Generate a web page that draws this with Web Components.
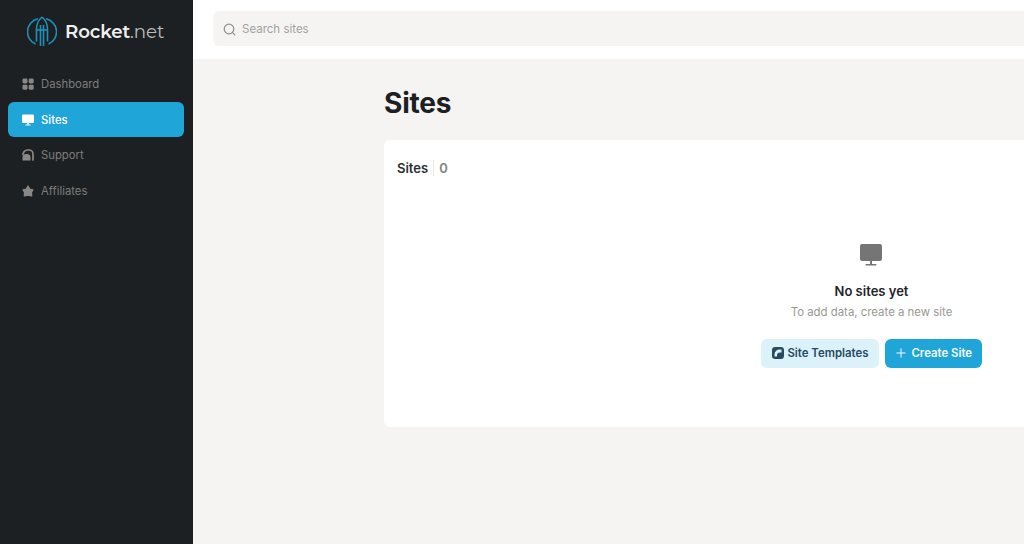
<!DOCTYPE html>
<html>
<head>
<meta charset="utf-8">
<style>
  html, body { margin: 0; height: 100%; overflow: hidden; }
  body { font-family: Inter, "Liberation Sans", sans-serif; }
</style>
</head>
<body>
<app-shell>
  <side-bar slot="side">
    <nav-item label="Dashboard" icon="grid"></nav-item>
    <nav-item label="Sites" icon="monitor" active></nav-item>
    <nav-item label="Support" icon="support"></nav-item>
    <nav-item label="Affiliates" icon="star"></nav-item>
  </side-bar>
  <search-bar slot="top" placeholder="Search sites"></search-bar>
  <sites-card slot="main" count="0">
    <empty-state title="No sites yet" text="To add data, create a new site">
      <app-button kind="soft" icon="template">Site Templates</app-button>
      <app-button kind="primary" icon="plus">Create Site</app-button>
    </empty-state>
  </sites-card>
</app-shell>

<script>
  const ICONS = {
    grid: '<svg viewBox="0 0 12 12" width="12" height="12" fill="currentColor"><rect x="0.5" y="0.5" width="5" height="5" rx="1.4"/><rect x="6.7" y="0.5" width="5" height="5" rx="1.4"/><rect x="0.5" y="6.7" width="5" height="5" rx="1.4"/><rect x="6.7" y="6.7" width="5" height="5" rx="1.4"/></svg>',
    monitor: '<svg viewBox="0 0 12 12" width="12" height="12" fill="currentColor"><rect x="0" y="0.5" width="12" height="8.500" rx="1.200"/><rect x="5.200" y="9" width="1.600" height="1.600"/><rect x="3.400" y="10.400" width="5.200" height="1" rx=".5"/></svg>',
    support: '<svg viewBox="0 0 12 12" width="12" height="12"><path d="M1 5.500A4.500 4.500 0 0 1 5.500 1H7A4 4 0 0 1 11 5V11" fill="none" stroke="currentColor" stroke-width="1.700" stroke-linecap="round"/><path d="M.5 11.500V8.500A3.500 3.500 0 0 1 4 5H5A3.500 3.500 0 0 1 8.500 8.500V11.500Z" fill="currentColor"/></svg>',
    star: '<svg viewBox="0 0 12 12" width="12" height="12" fill="currentColor"><path d="M6 1 7.700 4.100 11 4.800 9.500 7.500 9.700 11 6 10.100 2.300 11 2.500 7.500 1 4.800 4.300 4.100Z" stroke="currentColor" stroke-width="1.200" stroke-linejoin="round"/></svg>',
    template: '<svg viewBox="0 0 12 12" width="12" height="12"><rect x="0" y="0" width="12" height="12" rx="3.200" fill="currentColor"/><path d="M2.500 7.500A5 5 0 0 1 7.500 2.500H9.500V5.500H8A3 3 0 0 0 5 8.500V9.500H2.500Z" fill="#dcf2fa"/></svg>',
    plus: '<svg viewBox="0 0 12 12" width="12" height="12" fill="none" stroke="currentColor" stroke-width="1" stroke-linecap="round"><path d="M6 1.800v8.400M1.800 6h8.400"/></svg>'
  };

  class AppShell extends HTMLElement {
    constructor() {
      super();
      this.attachShadow({ mode: 'open' });
      this.shadowRoot.innerHTML = `
        <style>
          :host { display: grid; grid-template-columns: 193px 1fr; height: 544px; width: 1024px; overflow: hidden; }
          .side { background: #1c2023; }
          .right { display: flex; flex-direction: column; min-width: 0; background: #f5f4f2; }
          .top { background: #fff; height: 59px; box-sizing: border-box; padding: 11px 0 0 20px; }
          .main { padding: 26px 0 0 191px; }
          h1 { margin: 0 0 19px; font-size: 28px; line-height: 36px; font-weight: 700; color: #1c2023; letter-spacing: -0.2px; }
        </style>
        <div class="side"><slot name="side"></slot></div>
        <div class="right">
          <div class="top"><slot name="top"></slot></div>
          <div class="main">
            <h1>Sites</h1>
            <slot name="main"></slot>
          </div>
        </div>
      `;
    }
  }

  class SideBar extends HTMLElement {
    constructor() {
      super();
      this.attachShadow({ mode: 'open' });
      this.shadowRoot.innerHTML = `
        <style>
          :host { display: block; }
          .logo { display: flex; align-items: center; gap: 8px; height: 66px; box-sizing: border-box; padding: 0 0 3px 27px; }
          .name { font-family: Montserrat, "Open Sans", sans-serif; font-size: 18.200px; font-weight: 600; color: #f0f0f0; letter-spacing: -0.1px; }
          .name span { font-weight: 400; color: #bdbdbd; }
          nav { display: flex; flex-direction: column; padding: 0 9px 0 8px; }
          svg { display: block; }
        </style>
        <div class="logo">
          <svg width="30" height="32" viewBox="0 0 30 32" fill="none" stroke="#1e90ba" stroke-width="1.600">
            <path d="M11 2.800A13.300 13.300 0 0 0 8.500 28M19 2.800A13.300 13.300 0 0 1 21.500 28"/>
            <path d="M15 1C11.500 4 9.500 8.500 9.500 13V25.500M15 1C18.500 4 20.500 8.500 20.500 13V25.500"/>
            <path d="M13.500 9V30M16.500 9V30"/>
            <path d="M9.500 14H20.500"/>
          </svg>
          <div class="name">Rocket<span>.net</span></div>
        </div>
        <nav><slot></slot></nav>
      `;
    }
  }

  class NavItem extends HTMLElement {
    constructor() {
      super();
      this.attachShadow({ mode: 'open' });
      const active = this.hasAttribute('active');
      this.shadowRoot.innerHTML = `
        <style>
          :host { display: block; }
          .item { display: flex; align-items: center; gap: 7px; height: 35.700px; box-sizing: border-box; padding-left: 14px; border-radius: 6px; font-size: 11.300px; color: ${active ? '#fff' : '#7f7d7a'}; background: ${active ? '#20a5d8' : 'transparent'}; font-weight: ${active ? 500 : 400}; }
          svg { display: block; color: ${active ? '#fff' : '#8a8886'}; }
        </style>
        <div class="item">${ICONS[this.getAttribute('icon')]}<span>${this.getAttribute('label')}</span></div>
      `;
    }
  }

  class SearchBar extends HTMLElement {
    constructor() {
      super();
      this.attachShadow({ mode: 'open' });
      this.shadowRoot.innerHTML = `
        <style>
          :host { display: block; }
          .box { display: flex; align-items: center; gap: 6px; height: 35px; box-sizing: border-box; padding: 1px 0 0 10px; background: #f5f4f2; border-radius: 6px 0 0 6px; font-size: 11.500px; color: #a3a19e; }
          svg { display: block; }
        </style>
        <div class="box">
          <svg width="13" height="13" viewBox="0 0 13 13" fill="none" stroke="#8f8d8a" stroke-width="1.200" stroke-linecap="round"><circle cx="6" cy="6" r="4.800"/><path d="M9.600 9.600 11.800 11.800"/></svg>
          <span>${this.getAttribute('placeholder')}</span>
        </div>
      `;
    }
  }

  class SitesCard extends HTMLElement {
    constructor() {
      super();
      this.attachShadow({ mode: 'open' });
      this.shadowRoot.innerHTML = `
        <style>
          :host { display: block; }
          .card { background: #fff; border-radius: 6px 0 0 6px; height: 287px; box-sizing: border-box; padding: 20px 0 0 13px; display: flex; flex-direction: column; }
          .head { display: flex; align-items: center; font-size: 13px; line-height: 16px; font-weight: 600; color: #2a2e33; }
          .count { margin-left: 5px; padding-left: 5px; border-left: 1px solid #e8e7e5; color: #85837f; }
          .body { margin-top: 67px; width: 975px; margin-left: -13px; }
        </style>
        <div class="card">
          <div class="head"><span>Sites</span><span class="count">${this.getAttribute('count')}</span></div>
          <div class="body"><slot></slot></div>
        </div>
      `;
    }
  }

  class EmptyState extends HTMLElement {
    constructor() {
      super();
      this.attachShadow({ mode: 'open' });
      this.shadowRoot.innerHTML = `
        <style>
          :host { display: flex; flex-direction: column; align-items: center; }
          svg { display: block; color: #757575; margin-left: -1px; }
          h3 { margin: 14.500px 0 0; font-size: 13px; line-height: 18px; font-weight: 600; color: #1f2429; }
          p { margin: 4px 0 0; font-size: 11.400px; line-height: 16px; color: #9a9895; }
          .actions { display: flex; gap: 6px; margin-top: 19px; }
        </style>
        <svg width="24" height="24" viewBox="0 0 24 24" fill="currentColor"><rect x="1" y="1" width="22" height="17" rx="2"/><rect x="11" y="18" width="2" height="3.500"/><rect x="6.500" y="21" width="11" height="1.500" rx=".7"/></svg>
        <h3>${this.getAttribute('title')}</h3>
        <p>${this.getAttribute('text')}</p>
        <div class="actions"><slot></slot></div>
      `;
    }
  }

  class AppButton extends HTMLElement {
    constructor() {
      super();
      this.attachShadow({ mode: 'open' });
      const primary = this.getAttribute('kind') === 'primary';
      this.shadowRoot.innerHTML = `
        <style>
          :host { display: block; }
          button { display: flex; align-items: center; gap: ${primary ? 4 : 3}px; height: 29px; border: 0; margin: 0; border-radius: 6px; padding: 0 ${primary ? 9.5 : 11}px 0 ${primary ? 10 : 11}px; font: 600 11.400px Inter, "Liberation Sans", sans-serif; background: ${primary ? '#20a5d8' : '#dcf2fa'}; color: ${primary ? '#f4fbfe' : '#264a60'}; }
        </style>
        <button>${ICONS[this.getAttribute('icon')]}<slot></slot></button>
      `;
    }
  }

  customElements.define('app-shell', AppShell);
  customElements.define('side-bar', SideBar);
  customElements.define('nav-item', NavItem);
  customElements.define('search-bar', SearchBar);
  customElements.define('sites-card', SitesCard);
  customElements.define('empty-state', EmptyState);
  customElements.define('app-button', AppButton);
</script>
</body>
</html>
